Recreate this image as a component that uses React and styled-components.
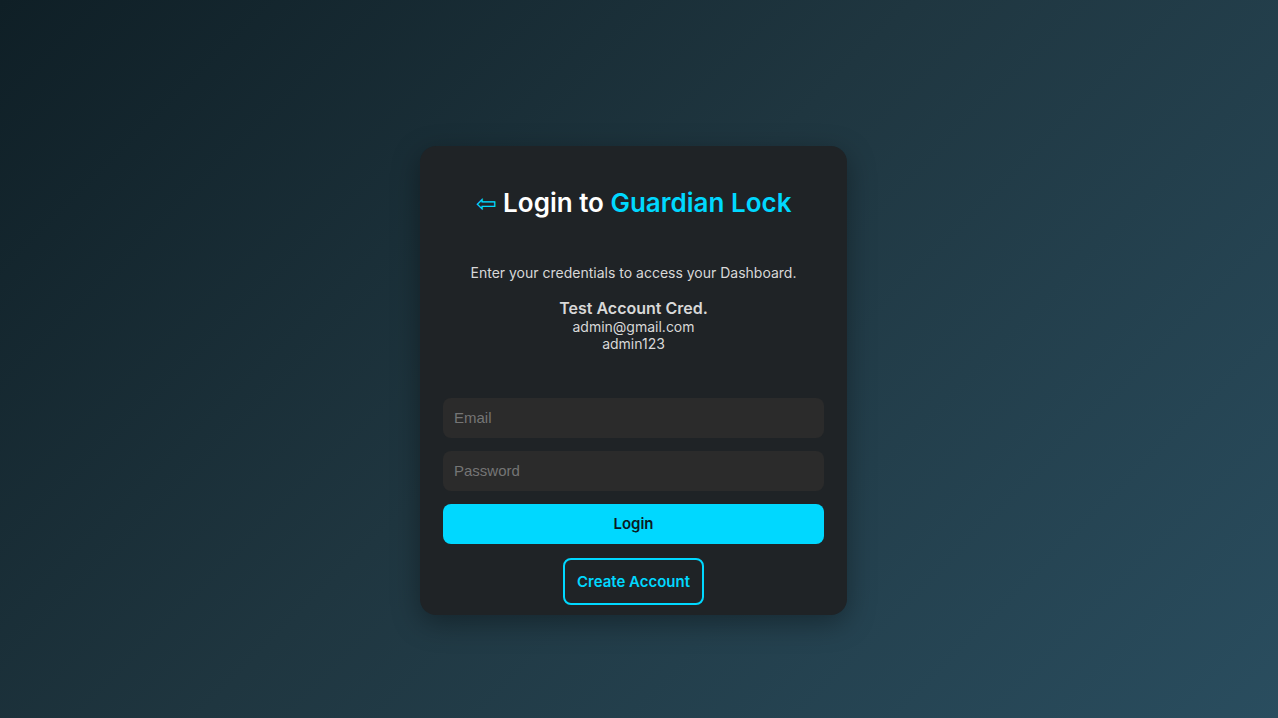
import styled, { createGlobalStyle } from "styled-components";

const Global = createGlobalStyle`
    html{
        color-scheme: dark;
    }
    body{
        margin: 0;
        font-family: 'Inter', sans-serif;
    }
`

export default function App(){
    return (
        <Page>
            <Global />
            <Card>
                <Title>
                    <Arrow>⇦</Arrow> Login to <span>Guardian Lock</span>
                </Title>
                <Subtitle>Enter your credentials to access your Dashboard.</Subtitle>
                <Creds>
                    <strong>Test Account Cred.</strong>
                    <span>admin@gmail.com</span>
                    <span>admin123</span>
                </Creds>
                <Form onSubmit={(e) => e.preventDefault()}>
                    <input type="email" placeholder="Email" />
                    <input type="password" placeholder="Password" />
                    <button type="submit">Login</button>
                </Form>
                <Outline type="button">Create Account</Outline>
            </Card>
        </Page>
    );
}

const Page = styled.div`
    min-height: 100vh;
    padding: 21px 11px 21px 0;
    display: flex;
    align-items: center;
    justify-content: center;
    background: linear-gradient(135deg, #0f1f26 0%, #1f3640 45%, #2a4e60 100%);
`

const Card = styled.div`
    width: 427px;
    box-sizing: border-box;
    padding: 30px 23px 10px;
    display: flex;
    flex-direction: column;
    align-items: center;
    background-color: #1f2326;
    border-radius: 16px;
    box-shadow: 0 8px 28px rgba(0, 0, 0, 0.35);
`

const Title = styled.h2`
    margin: 11px 0 44px;
    font-size: 26px;
    font-weight: 600;
    line-height: 32px;
    color: #ffffff;
    span{
        color: #00d8ff;
    }
`

const Arrow = styled.span`
    font-size: 25px;
    font-weight: 400;
    color: #00d8ff;
`

const Subtitle = styled.p`
    margin: 0 0 15px;
    font-size: 14px;
    line-height: 20px;
    color: #d8d8d8;
`

const Creds = styled.div`
    display: flex;
    flex-direction: column;
    align-items: center;
    font-size: 14px;
    line-height: 17px;
    color: #d8d8d8;
    strong{
        font-size: 16px;
        font-weight: 600;
        line-height: 20px;
    }
`

const Form = styled.form`
    width: 100%;
    margin-top: 46px;
    display: flex;
    flex-direction: column;
    gap: 13px;
    > input{
        height: 40px;
        box-sizing: border-box;
        padding: 0 11px;
        border: none;
        border-radius: 8px;
        background-color: #2b2b2b;
        color: #ffffff;
        font-family: 'Liberation Sans', Arial, sans-serif;
        font-size: 15px;
        outline: none;
        ::placeholder{
            color: #7d7d7d;
        }
    }
    > button{
        height: 40px;
        border: none;
        border-radius: 8px;
        background-color: #00d8ff;
        color: #0b1a22;
        font-family: 'Inter', sans-serif;
        font-size: 15px;
        font-weight: 600;
        cursor: pointer;
    }
`

const Outline = styled.button`
    margin-top: 14px;
    width: 141px;
    height: 47px;
    border: 2px solid #00d8ff;
    border-radius: 8px;
    background: transparent;
    color: #00d8ff;
    font-family: 'Inter', sans-serif;
    font-size: 15px;
    font-weight: 600;
    cursor: pointer;
`
